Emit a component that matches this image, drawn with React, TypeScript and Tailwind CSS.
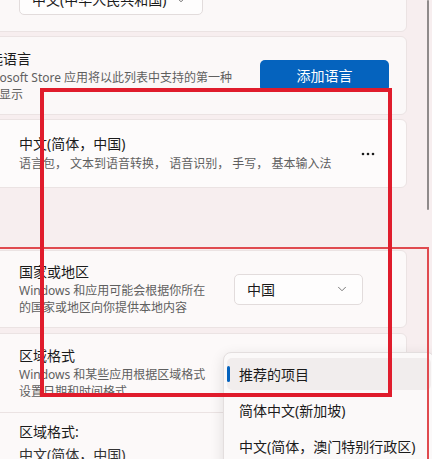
import React from "react";
import { ChevronDown } from "lucide-react";

const font = { fontFamily: '"Noto Sans", "Noto Sans CJK SC", sans-serif' };

function Dots() {
  return (
    <svg width="14" height="4" viewBox="0 0 14 4" className="text-[#1b1b1b]">
      <circle cx="2" cy="2" r="1.3" fill="currentColor" />
      <circle cx="7" cy="2" r="1.3" fill="currentColor" />
      <circle cx="12" cy="2" r="1.3" fill="currentColor" />
    </svg>
  );
}

export default function App() {
  return (
    <div
      className="relative w-[432px] h-[459px] overflow-hidden bg-[#f7eeef] text-[#1b1b1b]"
      style={font}
    >
      <div className="ml-[-60px] w-[467px] flex flex-col">
        {/* Card 1 */}
        <div className="mt-[-30px] h-[62px] rounded-md border border-[#ebe3e3] bg-[#fbf8f8] flex items-end pl-[78px] pb-[16px]">
          <div className="w-[184px] h-[31px] rounded-[5px] border border-[#e2dcdc] bg-[#fefdfd] flex items-center justify-between pl-[12px] pr-[14px] text-[14px]">
            <span>中文(中华人民共和国)</span>
            <ChevronDown size={14} strokeWidth={1.5} className="text-[#555]" />
          </div>
        </div>

        {/* Card 2 */}
        <div className="mt-[4px] h-[79px] rounded-md border border-[#ebe3e3] bg-[#fbf8f8] flex items-center justify-between pl-[34px] pr-[17px]">
          <div className="flex flex-col">
            <div className="text-[14px] leading-[20px]">首选语言</div>
            <div className="text-[12px] leading-[17px] text-[#5f5f5f] whitespace-nowrap">
              Microsoft Store 应用将以此列表中支持的第一种
              <br />
              语言显示
            </div>
          </div>
          <div className="w-[129px] h-[32px] rounded-[5px] bg-[#0563be] text-white text-[14px] flex items-center justify-center">
            添加语言
          </div>
        </div>

        {/* Card 3 */}
        <div className="mt-[4px] h-[69px] rounded-md border border-[#ebe3e3] bg-[#fdfbfb] flex items-center justify-between pl-[78px] pr-[31px]">
          <div className="flex flex-col">
            <div className="text-[14px] leading-[20px]">中文(简体，中国)</div>
            <div className="mt-[1px] text-[12px] leading-[18px] text-[#5f5f5f] whitespace-nowrap">
              语言包， 文本到语音转换， 语音识别， 手写， 基本输入法
            </div>
          </div>
          <Dots />
        </div>

        {/* Card 4 */}
        <div className="mt-[62px] h-[78px] rounded-md border border-[#ebe3e3] bg-[#fcf9f9] flex items-center pl-[78px]">
          <div className="flex flex-col w-[215px]">
            <div className="text-[14px] leading-[20px]">国家或地区</div>
            <div className="text-[12px] leading-[17px] text-[#5f5f5f] whitespace-nowrap">
              Windows 和应用可能会根据你所在
              <br />
              的国家或地区向你提供本地内容
            </div>
          </div>
          <div className="w-[129px] h-[31px] rounded-[5px] border border-[#e2dcdc] bg-[#fefdfd] flex items-center justify-between pl-[12px] pr-[13px] text-[14px]">
            <span>中国</span>
            <ChevronDown size={14} strokeWidth={1.5} className="text-[#666]" />
          </div>
        </div>

        {/* Card 5 */}
        <div className="mt-[5px] h-[160px] rounded-md border border-[#ebe3e3] bg-[#fcf9f9] flex flex-col">
          <div className="pl-[78px] pt-[12px] pb-[12px] border-b border-[#ebe3e3]">
            <div className="text-[14px] leading-[20px]">区域格式</div>
            <div className="text-[12px] leading-[17px] text-[#5f5f5f] whitespace-nowrap">
              Windows 和某些应用根据区域格式
              <br />
              设置日期和时间格式。
            </div>
          </div>
          <div className="pl-[78px] pt-[9px]">
            <div className="text-[14px] leading-[20px]">区域格式:</div>
            <div className="mt-[3px] text-[14px] leading-[20px] text-[#333]">中文(简体，中国)</div>
          </div>
        </div>
      </div>

      {/* scrollbar thumb */}
      <div className="absolute right-[3px] top-0 w-[2px] h-[210px] rounded-full bg-[#8f8a8a]" />

      {/* dropdown menu */}
      <div className="absolute left-[223px] top-[352px] w-[212px] h-[120px] rounded-lg border border-[#e3dede] bg-[#fbf9f9] shadow-[0_4px_14px_rgba(0,0,0,0.12)] px-[3px] pt-[5px] flex flex-col gap-[4px] text-[14px]">
        <div className="relative h-[32px] rounded-[5px] bg-[#f1eded] flex items-center pl-[12px] shrink-0">
          <div className="absolute left-[0px] top-[8px] w-[3px] h-[16px] rounded-full bg-[#0563be]" />
          推荐的项目
        </div>
        <div className="h-[32px] flex items-center pl-[12px] shrink-0">简体中文(新加坡)</div>
        <div className="h-[32px] flex items-center pl-[12px] shrink-0">中文(简体，澳门特别行政区)</div>
      </div>

      {/* annotation boxes */}
      <div className="absolute left-[-2px] top-[247px] w-[431px] h-[230px] border-2 border-[#e04a4f]" />
      <div className="absolute left-[40px] top-[88px] w-[352px] h-[309px] border-4 border-[#e01c2c]" />
    </div>
  );
}
